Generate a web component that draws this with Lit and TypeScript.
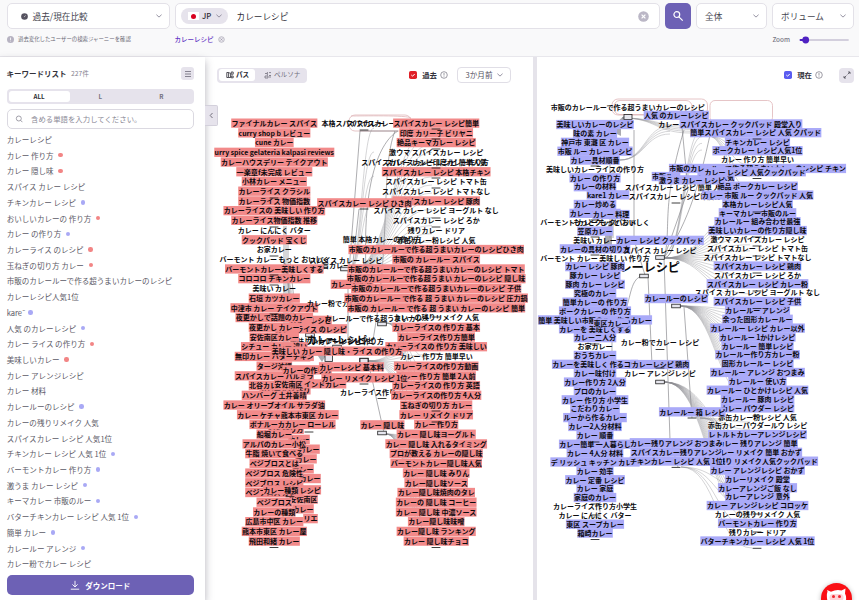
import { LitElement, html, svg, css } from "lit";
import { customElement, property } from "lit/decorators.js";
import { classMap } from "lit/directives/class-map.js";

type Label = [text: string, cx: number, y: number, plain?: boolean];

/** Expands a column of labels; a leading "-" marks a label without highlight, "" skips a row. */
const column = (cx: number, y0: number, pitch: number, rows: string): Label[] =>
  rows
    .split("|")
    .map((t, i): Label => [t.replace(/^-/, ""), cx, y0 + pitch * i, t.startsWith("-")])
    .filter((l) => l[0] !== "");

const widthOf = (text: string, size: number) => {
  let w = 0;
  for (const ch of text) {
    if (ch === " ") w += 0.224;
    else if (/[a-z]/.test(ch)) w += /[il]/.test(ch) ? 0.29 : 0.555;
    else if (/[0-9]/.test(ch)) w += 0.58;
    else w += 1;
  }
  return w * size;
};

const pastLabels: Label[] = [
  ["本格スパイスカレー", 353, 123.5, true],
  ["スパイスカレー", 371, 123.5, true],
  ["カレー", 309, 449.3], ["カレー", 306, 459], ["カレー", 303, 469], ["カレー", 310, 478.7],
  ["安佐南区", 303.5, 499.3], ["カレー", 303, 509], ["リエ", 310.5, 518.8],
  ["バターチキン", 289, 357], ["シピ作り方", 286, 429.5], ["カレー", 299, 439.5],
  ["カレーレシピ", 310.5, 320.5],
  ["カレーライス のレシピ", 311, 329],
  ["カレー北谷 作り", 285, 390],
  ...column(274.3, 123.3, 9.72,
    "ファイナルカレー スパイス|curry shop b レビュー|cune カレー|urry spice gelateria kalpasi reviews|カレーハウスデリー テイクアウト|一楽章f未完成 レビュー|小林カレー メニュー|カレーライス クラシル|カレーライス 物価指数|カレーライスの 美味しい 作り方|カレーライス物価指数 推移|-カレー にんにく バター|クックパッド 宝くじ|-お家カレー|-バーモント カレー もっと おいしく||コロコロ チキンカレー|-美味い カレー|石垣 カツカレー|中津市 カレー テイクアウト|夜更かしで話題のカレー|夜更かし カレー|安佐南区カレー|シチュー カレー 違い|無印カレー バターチキン|タージ沖縄|スパイスカレー パルミラ|北谷カレー 人気|ハンバーグ 土井善晴|カレー オリーブオイル サラダ油|||船堀カレー|アルパのカレー小松|牛脂 焼いて食べる|ベジブロスとは|ベジブロス 危険性|ベジブロス レシピ|ベジブロス カレー|ベジブロス|カレーの種類|広島市中区 カレー|熊本市東区 カレー屋|飛田和緒 カレー"),
  ["カレー ケチャ熊本市東区 カレー", 287.8, 414.9],
  ["ボナルーカカレー ローレル", 292.5, 424.6],
  ["安佐南区 インドカレー", 310.2, 384],
  ["カレー種類 レシピ", 292, 490],
  ["スパイス カレー レシピ", 346, 260.5, true],
  ["旨カレー", 336, 265.7, true],
  ["バーモントカレー美味しくする", 274.3, 269.1],
  ["カレーレシピ", 352, 284.5],
  ["カレー粉でカレー", 335, 303.5, true],
  ["カレールーで作る超うまいカレー", 377, 318, true],
  ["カレーの作り方", 307, 370],
  ["カレーレシピ 基本料", 351.5, 367],
  ["カレーライス作り", 368, 392, true],
  ["カレー 隠し味", 382.4, 425],
  ["スパイスカレー レシピ印度カレー作り方", 425, 162.6, true],
  ["簡単 本格カレーの作り方", 382, 239.3, true],
  ...column(436.2, 123.3, 9.72,
    "スパイスカレー レシピ簡単|印度 カリー子 ビリヤニ|絶品キーマカレー レシピ|-激ウマ スパイスカレー レシピ|-スパイスカレー レシピ 簡単人気|スパイスカレー レシピ 本格チキン|-スパイスカレー レシピ トマト缶|-スパイスカレー レシピ トマトなし|スパイスカレー レシピ 豚肉|-スパイス カレー レシピ ヨーグルト なし|-スパイスカレー レシピ ろか|-残りカレー ドリア|-赤缶カレー粉レシピ 人気|市販のカレールーで作る超うまいカレーのレシピひき肉|市販の カレールー スパイス|市販のカレールーで作る超うまいカレーのレシピ トマト|市販のカレールーで作る超うまい カレーのレシピ 隠し味|市販のカレールーで作る超うまいカレーのレシピ 子供|市販のカレールー で作る 超 うまい カレーのレシピ 圧力鍋|市販の カレールー で作る 超 うまい カレーのレシピ 簡単|-カレーの残りリメイク 人気|カレーライスの 作り方 基本|カレーライス作り方簡単|カレーライスの 作り方 美味しい|-カレー 作り方 簡単早い|カレーライスの作り方動画|カレー 作り方 簡単 2人前|カレーライスの 作り方 英語|カレーライスの作り方 4人分|玉ねぎの切り方 カレー|カレー リメイク ドリア|カレー 作り方|カレー 隠し味ヨーグルト|カレー 隠し味 入れるタイミング|プロが教える カレーの隠し味|バーモントカレー隠し味人気|カレー 隠し味 みりん|カレー隠し味ソース|カレー隠し味焼肉のタレ|カレーの 隠し味 コーヒー|カレー 隠し味 中濃ソース|カレー隠し味味噌|カレー隠し味 ランキング|カレー 隠し味チョコ"),
  ["スパイスカレー レシピ ひき肉", 364.5, 203],
  ["カレー リメイク レシピ 1位", 364.5, 378],
  ["美味しい カレー 隠し味・ライス の作り方", 337, 351.3],
];

const nowLabels: Label[] = [
  ["市販のカレールーで作る超うまいカレーのレシピ", 627.7, 107.7, true],
  ["カレー 隠し味", 680, 124.3, true],
  ["スパイスカレー レシピ 簡単 人気", 676, 187, true],
  ["スパイスカレー レシピ印度カリー", 682, 196.3, true],
  ["もっとクックパッド", 605, 222.6, true],
  ...column(595, 124.7, 8.88,
    "美味しいカレーのレシピ|味の素 カレー|神戸市 東灘 区 カレー|市販 ルー カレー レシピ|カレー具材順番|-美味しいカレーライスの作り方|カレー の作り方|カレーの材料||カレー炒める|カレー アレンジ|-バーモント カレー もっと おいしく|笠原カレー|-美味い カレー|カレーの具材の切り方|-バーモント カレー 美味しい 作り方|カレー レシピ 豚肉|豚カレー レシピ|豚肉 カレー レシピ|究極のカレー|簡単カレーの 作り方|ポークカレーの 作り方|簡単 美味しい市販のルー作るカレー|カレーを 美味しくする|カレー二人分|-お家カレー|おうちカレー|カレーを美味しく 作るコツ|カレー味付け|カレー作り方 2人分|プロのカレー|カレー 作り方 小学生|こだわりカレー|ルーから作るカレー|カレー2人分材料|カレー 順番|カレー簡単 一人暮らし|カレー 4人分 材料|デ リッシュ キッチン カレー|カレー 効率|カレー 定番 レシピ|カレー 家庭|家庭のカレー|-カレーライス作り方小学生|-カレー にんにく バター|東区 スープカレー|箱崎カレー"),
  ["kare1 カレー", 608, 195],
  ["カレー 料理", 611, 214.7],
  ["東区カレー", 611, 323],
  ["スパイス カレー レシピ", 660, 250, true],
  ["カレー粉でカレー レシピ", 660, 342.7, true],
  ["カレー アレンジレシピ", 660, 373.5, true],
  ["スパイスカレー クックパッド 殿堂入り", 741, 124.1],
  ["人気 のカレーレシピ", 676.3, 115.5],
  ["簡単スパイスカレー レシピ 人気 クパッド", 755.7, 132.8],
  ...column(757.5, 142, 8.87,
    "チキンカレー レシピ|ポークカレー レシピ人気1位|-カレー 作り方 簡単早い|市販のカレールーで作る超うまいカレーのレシピ チキン||絶品 ポークカレー レシピ|カレー 市販 ルー クックパッド 人気|本格カレーレシピ人気|キーマカレー市販のルー|カレールー 組み合わせ最強|美味しいカレーの作り方隠し味|-激ウマ スパイスカレー レシピ|-スパイスカレー レシピ トマト缶|-スパイスカレー レシピ トマトなし|スパイスカレー レシピ 鶏肉|-スパイスカレー レシピ ろか|スパイスカレー レシピ カレー粉|-スパイス カレー レシピ ヨーグルト なし|スパイスカレー レシピ 子供|カレールー アレンジ|余った固形カレールー|カレールー レシピ カレー以外|カレールー 1かけレシピ|カレールー 簡単レシピ|カレールー作り方カレー粉|固形カレールー レシピ|カレールー アレンジ おつまみ|カレールー 使い方|カレールー ひとかけレシピ 人気|カレールー 豚肉 レシピ|カレー パウダー レシピ|-赤缶カレー粉レシピ 人気|-赤缶カレーパウダールウ レシピ|レトルトカレーアレンジレシピ|カレー 残りアレンジ 簡単|カレー リメイク 簡単 おかず|カレー残り リメイク人気クックパッド|カレー アレンジレシピ おかず|カレーリメイク 殿堂|カレーアレンジご飯 なし|カレーアレンジ 意外|カレー アレンジレシピ コロッケ|-カレーの残りリメイク 人気|バーモントカレー 作り方|-残りカレー ドリア|バターチキンカレー レシピ 人気 1位"),
  ["市販ルー", 666, 176.7],
  ["レシピ 人気", 716, 176.9],
  ["カレー レシピ 人気クックパッド", 755, 171.9],
  ["激うま カレー レシピ", 692, 180],
  ["カレー レシピ クックパッド", 660, 240.5],
  ["カレールーのレシピ", 676.3, 298.7],
  ["カレーレシピ 鶏肉", 660.5, 364.7],
  ["カレールー 箱 レシピ", 692.3, 412],
  ["カレー残りアレンジ おつまみ", 676.3, 442.9],
  ["スパイスカレー残りアレンジ", 676.3, 452],
  ["チキンカレー レシピ 人気 1位", 676.3, 461.2],
];

/** Bundles of curves fanning out from one node: x, y, target x, target y range, count. */
type Fan = [number, number, number, number, number, number];

const pastFans: Fan[] = [
  [350, 271, 432, 128, 250, 16], [349, 271, 374, 128, 200, 4], [386, 323, 432, 330, 420, 7],
  [368, 361, 432, 330, 420, 12], [386, 434, 432, 440, 545, 12], [283, 262, 296, 300, 345, 7],
];
const nowFans: Fan[] = [
  [664, 258, 750, 208, 300, 16], [664, 258, 702, 130, 150, 4], [680, 306, 752, 310, 400, 18],
  [664, 382, 752, 440, 520, 16], [700, 418, 750, 422, 452, 5], [622, 118, 690, 126, 133, 5],
  [708, 136, 750, 142, 200, 6], [620, 160, 670, 126, 134, 4], [681, 467, 752, 490, 548, 4],
];
const pastNodes = [
  [345, 269], [337, 347], [364, 360], [382, 324], [382, 433], [310, 335], [318, 353],
];
const nowNodes = [
  [660, 257.5], [644, 276], [676, 306], [660, 382],
];
const pastTicks = [
  [364, 130], [364, 209], [274, 198], [274, 227], [274, 256], [274, 275], [274, 285], [274, 314],
  [436, 129], [436, 139], [436, 149], [436, 168], [436, 178], [436, 188], [436, 218], [436, 227],
  [436, 317], [436, 354], [436, 411], [436, 422], [436, 547.5], [274, 519], [274, 547.5], [309, 432], [364, 384], [382, 398.5], [290, 496.6],
];
const nowTicks = [
  [595, 166], [595, 220], [595, 237], [595, 255], [595, 344], [595, 442], [595, 504], [595, 515], [595, 539.5],
  [676, 203], [660, 349.5], [660, 368], [692, 418], [676, 467.4], [757, 139], [757, 178.5], [757, 212], [757, 237], [757, 246],
  [757, 256], [757, 273], [757, 291], [757, 308.5], [757, 416], [757, 514], [757, 532], [757, 548.3],
];

const fanPath = ([x, y, tx, a, b, n]: Fan) =>
  Array.from({ length: n }, (_, i) => {
    const ty = a + ((b - a) * i) / (n - 1);
    const m = (x + tx) / 2;
    return `M${x} ${y}C${m} ${y} ${m} ${ty} ${tx} ${ty}`;
  }).join("");

@customElement("journey-map")
class JourneyMap extends LitElement {
  @property() kind: "past" | "now" = "past";

  static styles = css`
    :host { display: block; height: 100%; }
    svg { display: block; width: 100%; height: 100%; }
    text { font-family: "Noto Sans CJK JP", sans-serif; font-weight: 700; font-size: 7px; fill: #0b0b0e; text-anchor: middle; }
    .past .box { fill: #f28a8a; }
    .now .box { fill: #aaaaf8; }
    .edge { fill: none; stroke: #8e8e93; stroke-width: 0.5; opacity: 0.75; }
    .trunk { fill: none; stroke: #77777c; stroke-width: 0.6; }
    .group { fill: none; stroke: #dfb6b9; stroke-width: 0.8; }
    .node { fill: #e6e6ee; stroke: #222; stroke-width: 0.8; }
    .bundle { fill: #88888e; opacity: 0.7; }
    .tick { stroke: #111; stroke-width: 1; opacity: 0.8; }
    .root { font-size: 12.1px; }
    .root.small { font-size: 10px; }
  `;

  render() {
    const past = this.kind === "past";
    const labels = past ? pastLabels : nowLabels;
    const trunk = past
      ? "M349 271L360 131M360 131H395C410 131 360 125 366 270M348 271V340M352 271L359 209M395 131C380 170 392 240 372 345M368 361L384 433M286 226V350M288 240V350M284 226V345M290 262L294 300M340 345L325 352"
      : "M634 130V240L645 275M682 127L688 190 664 258M664 258L670 440 678 467M648 277L652 365M710 135C700 180 690 220 664 258M684 307L692 418M610 150V238M613 170V238M612 335V355M600 500V525M644 276C630 276 631 300 625 310M664 258C672 230 660 210 684 130";
    return html`
      <svg class=${this.kind} viewBox=${past ? "205 57 328 543" : "537 57 322 543"} preserveAspectRatio="xMinYMin slice">
        ${past
          ? svg`<rect class="group" x="349" y="115" width="62" height="16" rx="6"></rect>
              <path class="group" d="M411 118c-3-3-50-2-60-2"></path>`
          : svg`<rect class="group" x="612" y="99" width="95.5" height="16" rx="6"></rect>
              <rect class="group" x="614" y="100.5" width="78" height="14" rx="6"></rect>
              <rect class="group" x="710" y="100.5" width="62.5" height="22" rx="5"></rect>`}
        <path class="trunk" d=${trunk}></path>
        ${(past ? pastFans : nowFans).map((f) => svg`<path class="edge" d=${fanPath(f)}></path>`)}
        ${past
          ? svg`<path class="bundle" d="M318 356 325 345 328 352 322 362Z"></path>`
          : svg`<path class="bundle" d="M617 134V122L625 115V119L621 124V136ZM604 249V240L609 222H612V247Z"></path>`}
        ${(past ? pastNodes : nowNodes).map(([x, y]) => svg`<rect class="node" x=${x - 4.3} y=${y - 1.8} width="8.6" height="3.6"></rect>`)}
        ${past
          ? svg`<rect class="node" x="325" y="353.500" width="7.500" height="8"></rect>
              <rect class="node" x="360" y="358.500" width="8" height="5"></rect>
              <text class="root small" x="337" y="344">カレーレシピ</text>
              <text x="340" y="342.500">カレーアレンジレシピ</text>
              <text x="337" y="343.500">美味しいカレー レシピ 作り方</text>`
          : svg`<rect class="node" x="624" y="114.5" width="8" height="5"></rect>
              <text class="root" x="649.7" y="271.6">レーレシピ</text>`}
        ${labels.map(([text, cx, y, plain]) => {
          const w = widthOf(text, 7);
          return svg`
            ${plain ? "" : svg`<rect class="box" x=${cx - w / 2 - 0.3} y=${y - 4.8} width=${w + 0.6} height="9.3"></rect>`}
            <text x=${cx} y=${y + 2.6} textLength=${w} lengthAdjust="spacingAndGlyphs">${text}</text>`;
        })}
        ${(past ? pastTicks : nowTicks).map(([x, y]) => svg`<path class="tick" d="M${x - 4.4} ${y}h8.8"></path>`)}
      </svg>
    `;
  }
}

const chevron = html`<svg class="chev" viewBox="0 0 8 8"><path d="M1.4 2.7 4 5.1 6.600 2.7"></path></svg>`;
const info = html`<svg class="info" viewBox="0 0 8 8"><circle cx="4" cy="4" r="3.3"></circle><path d="M4 2v2.6M4 5.4v.7"></path></svg>`;

const keywords: [string, ("r" | "b")?][] = [
  ["カレーレシピ"], ["カレー 作り方", "r"], ["カレー 隠し味", "r"], ["スパイス カレー レシピ"],
  ["チキンカレー レシピ", "b"], ["おいしいカレーの 作り方", "r"], ["カレー の作り方", "b"],
  ["カレーライス のレシピ", "r"], ["玉ねぎの切り方 カレー", "r"],
  ["市販のカレールーで作る超うまいカレーのレシピ"], ["カレーレシピ人気1位"], ["kare ̄", "b"],
  ["人気 のカレーレシピ", "b"], ["カレー ライス の作り方", "r"], ["美味しいカレー", "r"],
  ["カレー アレンジレシピ"], ["カレー 材料"], ["カレールーのレシピ", "b"], ["カレーの残りリメイク 人気"],
  ["スパイスカレー レシピ 人気1位"], ["チキンカレー レシピ 人気 1位", "b"], ["バーモントカレー 作り方", "b"],
  ["激うま カレー レシピ", "b"], ["キーマカレー 市販のルー", "b"], ["バターチキンカレー レシピ 人気 1位", "b"],
  ["簡単 カレー", "b"], ["カレールー アレンジ", "b"], ["カレー粉でカレー レシピ"],
];

@customElement("app-root")
class AppRoot extends LitElement {
  static styles = css`
    :host { display: flex; flex-direction: column; width: 859px; height: 600px; overflow: hidden; position: relative; background: #fff; color: #45454f; font: 400 7.6px/1.2 "Noto Sans CJK JP", sans-serif; }
    * { box-sizing: border-box; }
    svg { flex: none; }
    .chev { width: 8px; height: 8px; fill: none; stroke: #8b8898; stroke-width: 0.9; }
    .info { width: 8px; height: 8px; fill: none; stroke: #74727f; stroke-width: 0.7; }
    header { flex: none; height: 57px; background: #f9f9fa; border-bottom: 1px solid #e8e7ec; padding: 3px 5px 0 6.5px; }
    .bar { display: flex; height: 26px; }
    .field { display: flex; align-items: center; background: #fff; border: 1px solid #e3e1e8; border-radius: 5px; font-size: 8.65px; }
    .mode { width: 163px; margin-right: 5px; padding: 0 6px 0 13px; }
    .mode svg:first-child { width: 7px; height: 7px; margin-right: 5px; }
    .grow { flex: 1; }
    .query { width: 485.5px; margin-right: 5px; padding: 0 10px 0 5.5px; color: #2e2d36; }
    .pill { display: flex; align-items: center; width: 47px; height: 15.5px; border-radius: 8px; background: #e6e3ec; margin-right: 8.5px; padding-left: 7px; font-size: 7.8px; font-weight: 500; }
    .flag { width: 11px; height: 7.5px; background: #fff; margin-right: 3px; display: grid; place-items: center; }
    .flag i { width: 5px; height: 5px; border-radius: 50%; background: #d8001f; }
    .pill .chev { margin-left: 3.5px; }
    .clear { width: 11px; height: 11px; }
    .go { width: 26px; border-radius: 5px; background: #6d61b5; display: grid; place-items: center; margin-right: 5px; }
    .go svg { width: 12px; height: 12px; fill: none; stroke: #fff; stroke-width: 1.2; }
    .scope { width: 71px; margin-right: 5px; padding: 0 6px 0 8px; }
    .volume { width: 82px; padding: 0 6px 0 8px; }
    .sub { display: flex; align-items: center; height: 21px; font-size: 5.4px; color: #6a6875; }
    .sub .badge { width: 7px; height: 7px; margin: 0 4px 0 0.5px; }
    .sub .hint { width: 156.5px; white-space: nowrap; }
    .crumb { font-size: 6.5px; font-weight: 500; color: #6237c4; margin-right: 4px; }
    .sub .x { width: 7px; height: 7px; }
    .zoom { font: 500 6.4px "Noto Sans CJK JP", sans-serif; color: #7a7886; margin-right: 8.5px; }
    .slider { width: 50px; height: 8px; margin-right: 5.5px; }
    main { flex: 1; min-height: 0; display: flex; }
    aside { width: 205px; flex: none; position: relative; z-index: 2; background: #fff; box-shadow: 0 4px 8px rgba(40, 35, 60, 0.35); padding: 10px 11px 0 6.5px; display: flex; flex-direction: column; }
    .title { display: flex; align-items: center; height: 13px; font-size: 7.5px; font-weight: 700; color: #33323b; }
    .count { font-size: 6.7px; font-weight: 400; color: #85828f; margin-left: 4.5px; }
    .menu { width: 13px; height: 13px; border-radius: 3px; background: #e6e3ec; display: grid; place-items: center; }
    .menu svg { width: 8px; height: 8px; stroke: #6d6a78; stroke-width: 0.8; }
    .tabs { display: flex; height: 15px; margin-top: 9px; flex: none; border-radius: 4px; background: #e6e3ec; padding: 2px; font-size: 6.2px; font-weight: 700; color: #74717e; }
    .tabs span { flex: 1; display: grid; place-items: center; border-radius: 3px; }
    .tabs .on { background: #fff; color: #2c2b33; }
    .search { height: 20px; margin-top: 5px; flex: none; border: 1px solid #dbd9e1; border-radius: 5px; display: flex; align-items: center; font-size: 7.4px; color: #8b8996; padding-left: 7.5px; }
    .search svg { width: 8px; height: 8px; margin-right: 8px; fill: none; stroke: #8b8996; stroke-width: 0.8; }
    .list { margin-top: 2.6px; padding-left: 0.2px; }
    .kw { height: 15.73px; display: flex; align-items: center; white-space: nowrap; font-size: 7.55px; color: #5b5966; }
    .dot { width: 4.4px; height: 4.4px; border-radius: 50%; margin-left: 4.7px; }
    .dot.r { background: #f28585; }
    .dot.b { background: #a9a9f5; }
    .download { position: absolute; left: 6.5px; top: 518px; width: 187.5px; height: 20px; border-radius: 5px; background: #6d61b5; color: #fff; font-size: 7.5px; font-weight: 700; display: flex; align-items: center; justify-content: center; gap: 5px; }
    .download svg { width: 10px; height: 10px; fill: none; stroke: #fff; stroke-width: 0.9; }
    .panel { position: relative; overflow: hidden; background: #fff; }
    .panel.a { width: 327.5px; flex: none; }
    .split { width: 4.5px; flex: none; background: #e5e3ea; }
    .panel.b { flex: 1; }
    .tools { position: absolute; inset: 10px 0 auto 0; display: flex; align-items: center; height: 16px; padding: 0 22px 0 12px; font-size: 7.4px; color: #33323b; white-space: nowrap; }
    .b .tools { padding: 0 5px 0 0; }
    .seg { display: flex; width: 90px; height: 15px; border-radius: 4px; background: #e6e3ec; padding: 1.5px; font-size: 6.6px; color: #74717e; }
    .seg span { display: flex; align-items: center; gap: 2.5px; padding-left: 9px; border-radius: 3px; width: 51px; }
    .seg .on { width: 36px; background: #fff; color: #2c2b33; font-weight: 700; padding-left: 7px; }
    .seg svg { width: 8px; height: 8px; fill: none; stroke: currentColor; stroke-width: 0.8; }
    .check { width: 8px; height: 8px; border-radius: 1.8px; margin-right: 5.5px; display: grid; place-items: center; }
    .check svg { width: 6px; height: 6px; fill: none; stroke: #fff; stroke-width: 1; }
    .check.red { background: #e02027; }
    .check.blue { background: #5a5cf0; }
    .tools b { font-weight: 700; margin-right: 3px; }
    .period { display: flex; align-items: center; width: 54px; height: 16px; border: 1px solid #e0dee6; border-radius: 4px; padding-left: 8px; margin-left: 8.5px; color: #55535f; font-size: 7.6px; }
    .period .chev { margin-left: 3px; }
    .expand { width: 15px; height: 15px; border-radius: 4px; background: #e6e3ec; display: grid; place-items: center; margin-left: 16px; }
    .expand svg { width: 8px; height: 8px; fill: none; stroke: #4d4b57; stroke-width: 0.8; }
    .collapse { position: absolute; z-index: 3; left: 205px; top: 105px; width: 13px; height: 21px; background: #e6e3ec; border: 1px solid #d3d0db; border-left: 0; border-radius: 0 2px 2px 0; display: grid; place-items: center; }
    .collapse svg { width: 7px; height: 7px; fill: none; stroke: #66636f; stroke-width: 0.9; }
    .bot { position: absolute; left: 820.5px; top: 583px; width: 31px; height: 31px; border-radius: 50%; background: #fa0f14; box-shadow: 0 1px 5px rgba(0, 0, 0, 0.3); z-index: 4; }
    .bot svg { display: block; width: 31px; height: 31px; }
  `;

  render() {
    return html`
      <header>
        <div class="bar">
          <div class="field mode">
            <svg viewBox="0 0 8 8"><circle cx="4" cy="4" r="3.8" fill="#55525f"></circle><path d="M3.4 4.6 5.4 2.8" stroke="#fff" stroke-width=".6"></path></svg>
            <span class="grow">過去/現在比較</span>${chevron}
          </div>
          <div class="field query">
            <div class="pill"><span class="flag"><i></i></span>JP ${chevron}</div>
            <span class="grow">カレーレシピ</span>
            <svg class="clear" viewBox="0 0 11 11"><circle cx="5.5" cy="5.5" r="5.3" fill="#bbb7c6"></circle><path d="M3.6 3.6l3.8 3.8M7.4 3.6 3.6 7.4" stroke="#fff" stroke-width="1.2"></path></svg>
          </div>
          <div class="go"><svg viewBox="0 0 12 12"><circle cx="4.8" cy="4.6" r="2.9"></circle><path d="M6.9 6.800l3.800 3.800"></path></svg></div>
          <div class="field scope"><span class="grow">全体</span>${chevron}</div>
          <div class="field volume"><span class="grow">ボリューム</span>${chevron}</div>
        </div>
        <div class="sub">
          <svg class="badge" viewBox="0 0 8 8"><circle cx="4" cy="4" r="4" fill="#b7b3c2"></circle><path d="M4 1.8v2.8M4 5.4v.8" stroke="#fff" stroke-width=".9"></path></svg>
          <span class="hint">過去変化したユーザーの検索ジャーニーを確認</span>
          <span class="crumb">カレーレシピ</span>
          <svg class="x" viewBox="0 0 8 8"><circle cx="4" cy="4" r="3.2" fill="#e9e7ee" stroke="#aaa7b5" stroke-width=".8"></circle><path d="M2.8 2.8l2.4 2.4M5.2 2.8 2.8 5.2" stroke="#96939f" stroke-width=".7"></path></svg>
          <span class="grow"></span>
          <span class="zoom">Zoom</span>
          <svg class="slider" viewBox="0 0 50 8"><path d="M1.5 4H49" stroke="#d3cfdd" stroke-width="1.8" stroke-linecap="round"></path><path d="M1.5 4H6" stroke="#4f22c2" stroke-width="1.8" stroke-linecap="round"></path><circle cx="6.7" cy="4" r="3.4" fill="#4f22c2"></circle></svg>
        </div>
      </header>
      <main>
        <aside>
          <div class="title">キーワードリスト<span class="count">227件</span><span class="grow"></span>
            <span class="menu"><svg viewBox="0 0 8 8"><path d="M1 1.500h6M1 4h6M1 6.500h6"></path></svg></span></div>
          <div class="tabs"><span class="on">ALL</span><span>L</span><span>R</span></div>
          <div class="search"><svg viewBox="0 0 8 8"><circle cx="3.8" cy="3.5" r="2.5"></circle><path d="M5.6 5.3 7.4 7.2"></path></svg>含める単語を入力してください。</div>
          <div class="list">
            ${keywords.map(([text, dot]) => html`<div class="kw">${text}${dot ? html`<i class=${classMap({ dot: true, r: dot === "r", b: dot === "b" })}></i>` : ""}</div>`)}
          </div>
          <div class="download"><svg viewBox="0 0 10 10"><path d="M5 .8v6M2.4 4.4 5 7l2.6-2.6M.8 9.2h8.4"></path></svg>ダウンロード</div>
        </aside>
        <section class="panel a">
          <journey-map kind="past"></journey-map>
          <div class="tools">
            <div class="seg">
              <span class="on"><svg viewBox="0 0 8 8"><path d="M.8 1.5h1.8v5H.8zM2.6 1.5c1 0 1 1 2 1V6.5h-2M5.2 1h2v2.2h-2zM5.2 5h2v1.8h-2z"></path></svg>パス</span>
              <span><svg viewBox="0 0 8 8"><path d="M3.4 1v3.6M1 5h3v2H1zM5 1.6h2M6 4v3M1 2.5h2M5 4.5h2"></path></svg>ペルソナ</span>
            </div>
            <span class="grow"></span>
            <span class="check red"><svg viewBox="0 0 6 6"><path d="M1.3 3 2.6 4.2 4.7 2"></path></svg></span><b>過去</b>${info}
            <div class="period">3か月前${chevron}</div>
          </div>
        </section>
        <div class="split"></div>
        <section class="panel b">
          <journey-map kind="now"></journey-map>
          <div class="tools">
            <span class="grow"></span>
            <span class="check blue"><svg viewBox="0 0 6 6"><path d="M1.3 3 2.6 4.2 4.7 2"></path></svg></span><b>現在</b>${info}
            <span class="expand"><svg viewBox="0 0 8 8"><path d="M4.6 3.4 7 1M5 1h2v2M3.4 4.6 1 7M1 5v2h2"></path></svg></span>
          </div>
        </section>
      </main>
      <div class="collapse"><svg viewBox="0 0 7 7"><path d="M4.5 1 2.2 3.5 4.5 6"></path></svg></div>
      <div class="bot"><svg viewBox="0 0 31 31"><path d="M6.5 8.5 6 7l4 1.8Q15.5 6 20.500 7.500L24.500 5.500 24 10.500Q26 14 24.500 20H7Q5 13 6.500 8.500Z" fill="#fff"></path><rect x="8.500" y="11" width="14" height="7" rx="3.500" fill="#ffd3d6"></rect><circle cx="12.500" cy="13.500" r="1.500" fill="#f0252c"></circle><circle cx="18.500" cy="13.500" r="1.500" fill="#f0252c"></circle></svg></div>
    `;
  }
}
